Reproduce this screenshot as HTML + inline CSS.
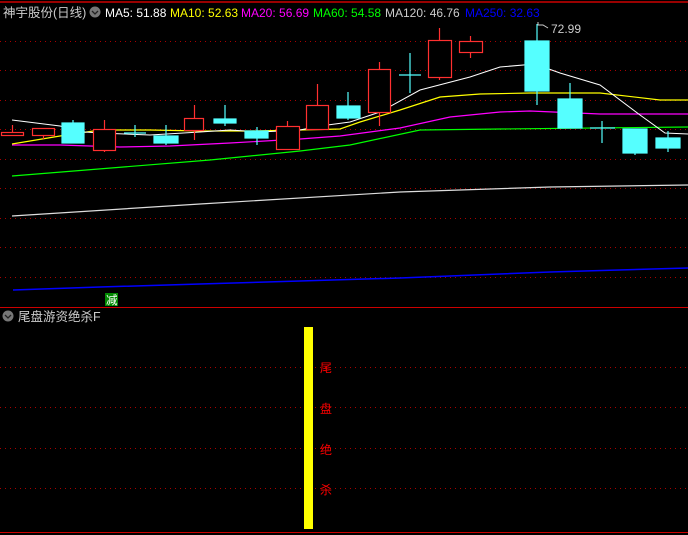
<!DOCTYPE html>
<html><head><meta charset="utf-8"><style>
body{margin:0;background:#000;width:688px;height:535px;overflow:hidden;font-family:"Liberation Sans","Noto Sans CJK SC",sans-serif}
svg{position:absolute;left:0;top:0}
</style></head><body>
<svg width="688" height="535" xmlns="http://www.w3.org/2000/svg" font-family="Liberation Sans, Noto Sans CJK SC, sans-serif">
<line x1="0" y1="2" x2="688" y2="2" stroke="#c00" stroke-width="1.5"/>
<g stroke="#a00" stroke-dasharray="1,4" stroke-width="1">
<line x1="0" y1="41.5" x2="688" y2="41.5"/><line x1="0" y1="70.5" x2="688" y2="70.5"/><line x1="0" y1="100.5" x2="688" y2="100.5"/><line x1="0" y1="129.5" x2="688" y2="129.5"/><line x1="0" y1="159.5" x2="688" y2="159.5"/><line x1="0" y1="188.5" x2="688" y2="188.5"/><line x1="0" y1="218.5" x2="688" y2="218.5"/><line x1="0" y1="247.5" x2="688" y2="247.5"/><line x1="0" y1="277.5" x2="688" y2="277.5"/>
<line x1="0" y1="367.5" x2="688" y2="367.5"/><line x1="0" y1="407.5" x2="688" y2="407.5"/><line x1="0" y1="448.5" x2="688" y2="448.5"/><line x1="0" y1="488.5" x2="688" y2="488.5"/>
</g>
<line x1="0" y1="307.5" x2="688" y2="307.5" stroke="#c00" stroke-width="1"/>
<line x1="0" y1="532.5" x2="688" y2="532.5" stroke="#c00" stroke-width="1"/>
<!-- MA lines -->
<polyline fill="none" stroke="#ddd" stroke-width="1.2" points="12,216 200,204 400,192 550,187 688,185"/>
<polyline fill="none" stroke="#00f" stroke-width="1.5" points="13,290 100,287 200,284 300,281 400,278 550,272 688,268"/>
<polyline fill="none" stroke="#0f0" stroke-width="1.2" points="12,176 210,160 300,151 350,145 420,130 500,129 688,127"/>
<polyline fill="none" stroke="#f0f" stroke-width="1.2" points="12,145 60,145 120,147 170,146 230,143 300,139 340,136 400,128 450,117 500,112 530,111 600,114 688,114"/>
<polyline fill="none" stroke="#ff0" stroke-width="1.2" points="12,144 60,136 100,130 150,130 200,131 250,131 300,130 340,129 360,122 400,110 440,97 480,94 530,93 600,93 660,100 688,100"/>
<polyline fill="none" stroke="#fff" stroke-width="1" points="12,120 60,126 85,132 100,133 150,135 200,132 230,130 260,132 300,130 320,126 350,122 380,112 420,90 470,77 500,67 535,64 560,73 600,85 640,115 665,133 688,134"/>
<!-- candles -->
<g stroke="#ff3030" stroke-width="1.2" fill="#000">
<line x1="12.5" y1="125" x2="12.5" y2="132"/><rect x="1.5" y="132.5" width="22" height="3"/>
<line x1="43.5" y1="135" x2="43.5" y2="139"/><rect x="32.5" y="128.5" width="22" height="7"/>
<line x1="104.5" y1="120" x2="104.5" y2="152"/><rect x="93.5" y="129.5" width="22" height="21"/>
<line x1="194.5" y1="105" x2="194.5" y2="140"/><rect x="184.5" y="118.5" width="19" height="12"/>
<line x1="287.5" y1="121" x2="287.5" y2="126"/><rect x="276.5" y="126.5" width="23" height="23"/>
<line x1="317.5" y1="84" x2="317.5" y2="105"/><rect x="306.5" y="105.5" width="22" height="24"/>
<line x1="379.5" y1="62" x2="379.5" y2="126"/><rect x="368.5" y="69.5" width="22" height="43"/>
<line x1="439.5" y1="28" x2="439.5" y2="80"/><rect x="428.5" y="40.5" width="23" height="37"/>
<line x1="470.5" y1="36" x2="470.5" y2="58"/><rect x="459.5" y="41.5" width="23" height="11"/>
</g>
<g stroke="#55ffff" stroke-width="1.2" fill="#55ffff">
<line x1="73" y1="120" x2="73" y2="143"/><rect x="62" y="123" width="22" height="20"/>
<line x1="135" y1="125" x2="135" y2="137"/><line x1="124" y1="133" x2="146" y2="133"/>
<line x1="166" y1="125" x2="166" y2="145"/><rect x="154" y="136" width="24" height="7"/>
<line x1="225" y1="105" x2="225" y2="126"/><rect x="214" y="119" width="22" height="4"/>
<line x1="257" y1="127" x2="257" y2="145"/><rect x="245" y="131" width="23" height="7"/>
<line x1="348" y1="92" x2="348" y2="120"/><rect x="337" y="106" width="23" height="12"/>
<line x1="410" y1="53" x2="410" y2="93"/><line x1="399" y1="75" x2="421" y2="75"/>
<line x1="537" y1="24" x2="537" y2="105"/><rect x="525" y="41" width="24" height="50"/>
<line x1="570" y1="83" x2="570" y2="128"/><rect x="558" y="99" width="24" height="29"/>
<line x1="602" y1="121" x2="602" y2="143"/><line x1="590" y1="128" x2="615" y2="128"/>
<line x1="635" y1="129" x2="635" y2="155"/><rect x="623" y="129" width="24" height="24"/>
<line x1="668" y1="131" x2="668" y2="152"/><rect x="656" y="138" width="24" height="10"/>
</g>
<polyline fill="none" stroke="#ccc" points="538,22 538,25 543,25 548,28"/>
<text x="551" y="33" fill="#ccc" font-size="12">72.99</text>
<!-- header -->
<text x="3" y="17" fill="#ccc" font-size="12.5">神宇股份(日线)</text>
<circle cx="95" cy="12" r="5.5" fill="#777"/><polyline points="92,11 95,14 98,11" fill="none" stroke="#222" stroke-width="1.3"/>
<text y="17" font-size="12"><tspan x="105" fill="#fff">MA5: 51.88</tspan><tspan x="170" fill="#ff0">MA10: 52.63</tspan><tspan x="241" fill="#f0f">MA20: 56.69</tspan><tspan x="313" fill="#0f0">MA60: 54.58</tspan><tspan x="385" fill="#ccc">MA120: 46.76</tspan><tspan x="465" fill="#00f">MA250: 32.63</tspan></text>
<rect x="105" y="293" width="13" height="13" fill="#080"/>
<text x="106" y="304" fill="#fff" font-size="11.5">减</text>
<!-- lower -->
<circle cx="8" cy="316" r="5.5" fill="#777"/><polyline points="5,315 8,318 11,315" fill="none" stroke="#222" stroke-width="1.3"/>
<text x="18" y="321" fill="#ccc" font-size="12.5">尾盘游资绝杀F</text>
<rect x="304" y="327" width="9" height="202" fill="#ff0"/>
<g fill="#f00" font-size="12"><text x="320" y="372">尾</text><text x="320" y="413">盘</text><text x="320" y="454">绝</text><text x="320" y="494">杀</text></g>
</svg>
</body></html>
